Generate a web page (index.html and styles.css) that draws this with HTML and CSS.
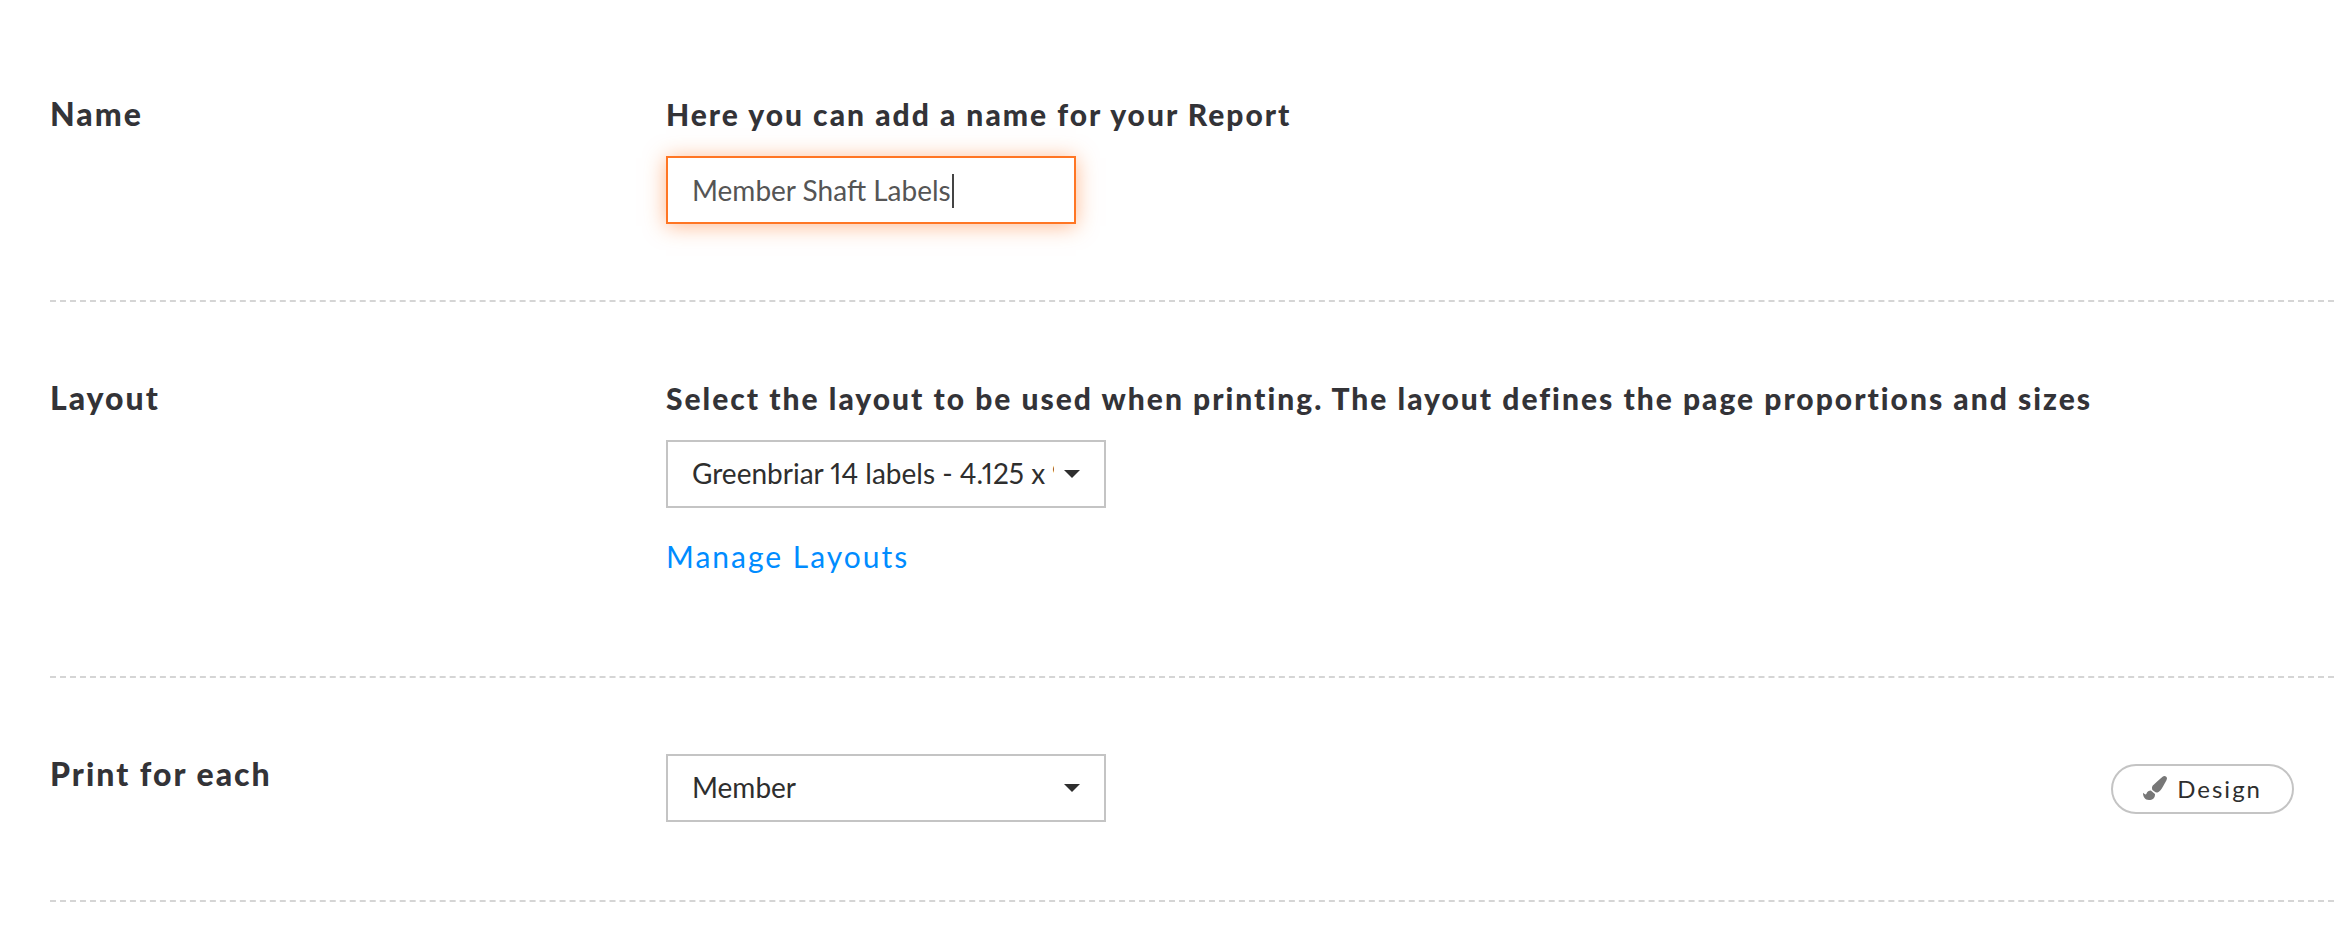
FILE: index.html
```html
<!DOCTYPE html>
<html lang="en">
<head>
  <meta charset="UTF-8" />
  <title>Report Settings</title>
  <link rel="stylesheet" href="styles.css">
</head>
<body>

  <form class="report-form">

    <div class="form-row">
      <h2 class="row-title">Name</h2>
      <div class="row-content">
        <label class="field-label" for="report-name">Here you can add a name for your Report</label>
        <div class="input-box">
          <input class="text-input" type="text" id="report-name" value="Member Shaft Labels" autofocus />
          <span class="caret"></span>
        </div>
      </div>
    </div>

    <div class="form-row">
      <h2 class="row-title">Layout</h2>
      <div class="row-content">
        <label class="field-label" for="report-layout">Select the layout to be used when printing. The layout defines the page proportions and sizes</label>
        <div class="select-box">
          <select id="report-layout">
            <option>Greenbriar 14 labels - 4.125 x 9</option>
          </select>
        </div>
        <a class="manage-link" href="#">Manage Layouts</a>
      </div>
    </div>

    <div class="form-row">
      <h2 class="row-title"><label for="print-for">Print for each</label></h2>
      <div class="row-content row-inline">
        <div class="select-box">
          <select id="print-for">
            <option>Member</option>
          </select>
        </div>
        <button class="design-btn" type="button">
          <svg class="brush-icon" viewBox="0 0 512 512" aria-hidden="true">
            <path d="M167 309c-40 3-76 18-97 73-2 6-8 10-15 10-11 0-45-28-55-35 0 83 38 155 128 155 76 0 128-44 128-120 0-3-1-6-1-9zM458 0c-15 0-29 7-40 16C213 199 192 203 192 257c0 14 3 27 9 39l64 53c7 2 14 3 22 3 62 0 98-45 211-256 7-15 14-30 14-46C512 21 486 0 458 0z" />
          </svg>
          Design
        </button>
      </div>
    </div>

  </form>

</body>
</html>
```

FILE: styles.css
```css
* {
  box-sizing: border-box;
}

body {
  margin: 0;
  background: #fff;
  color: #333337;
  font-family: Lato, "Open Sans", sans-serif;
  font-size: 30px;
  line-height: 40px;
}

.report-form {
  padding: 18px 0 0 50px;
}

.form-row {
  display: grid;
  grid-template-columns: 616px 1fr;
  padding: 76px 0;
  border-bottom: 2px dashed #d5d5d5;
}

.row-title {
  margin: 0;
  font-size: 32px;
  font-weight: 900;
  letter-spacing: 2px;
}

.row-content {
  display: flex;
  flex-direction: column;
  align-items: flex-start;
}

.row-inline {
  flex-direction: row;
  align-items: center;
  justify-content: space-between;
  min-height: 70px;
  padding-right: 40px;
}

.field-label {
  margin-bottom: 22px;
  font-weight: 900;
  letter-spacing: 2px;
}

.text-input,
.select-box select {
  display: block;
  height: 68px;
  padding: 0 24px;
  border: 2px solid #c4c4c4;
  border-radius: 0;
  background: #fff;
  color: #2e2e2e;
  font-family: inherit;
  font-size: 28px;
  font-variant-numeric: proportional-nums;
}

.input-box,
.select-box {
  position: relative;
}

.text-input {
  width: 410px;
  color: #555;
  caret-color: transparent;
}

.text-input:focus {
  outline: none;
  border-color: #ff7624;
  box-shadow: 0 2px 20px rgba(255, 118, 36, 0.5);
}

/* text cursor, steady instead of blinking */
.caret {
  position: absolute;
  top: 18px;
  left: 286px;
  width: 2px;
  height: 34px;
  background: #444;
  pointer-events: none;
}

.select-box {
  align-self: flex-start;
}

.select-box select {
  width: 440px;
  padding: 0 50px 2px 24px;
  appearance: none;
}

/* drop-down arrow */
.select-box::after {
  content: "";
  position: absolute;
  top: 30px;
  right: 26px;
  border: 8px solid transparent;
  border-top-color: #2e2e2e;
  border-bottom: 0;
  pointer-events: none;
}

.manage-link {
  margin: 28px 0 24px;
  color: #008cff;
  letter-spacing: 2px;
  text-decoration: none;
}

.design-btn {
  display: flex;
  align-items: center;
  gap: 10px;
  height: 50px;
  padding: 0 30px 2px;
  border: 2px solid #c4c4c4;
  border-radius: 25px;
  background: #fff;
  color: #2e2e2e;
  font-family: inherit;
  font-size: 24px;
  letter-spacing: 2px;
  cursor: pointer;
}

.brush-icon {
  width: 24px;
  height: 24px;
  fill: #777;
}
```
